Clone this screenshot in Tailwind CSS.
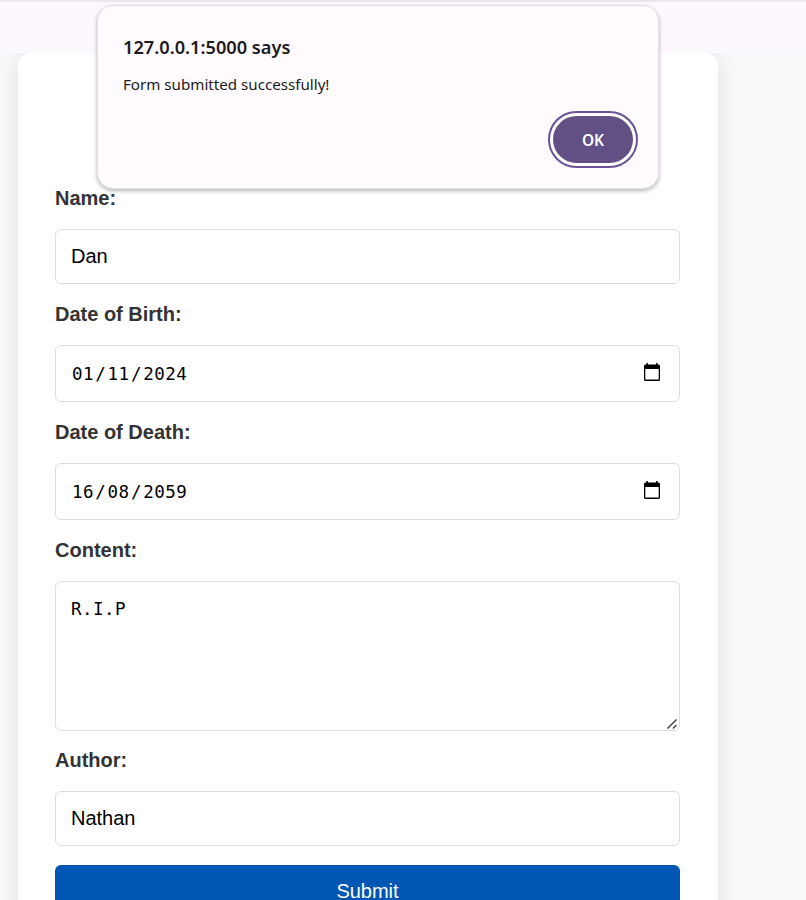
<!DOCTYPE html>
<html lang="en">
<head>
<meta charset="utf-8">
<title>Submit a memorial</title>
<script src="https://cdn.jsdelivr.net/npm/@tailwindcss/browser@4"></script>
</head>
<body class="h-[900px] overflow-hidden bg-[#f9f9f9] font-['Liberation_Sans',Arial,sans-serif] text-[20px] text-[#333]">
<div class="flex h-[900px] flex-col overflow-hidden">
  <header class="h-[53px] shrink-0 border-t-2 border-[#ece6ee] bg-[#fdf7ff]"></header>
  <main class="h-[847px] overflow-hidden pl-[18px]">
    <form class="h-[950px] w-[700px] rounded-[13px] bg-white pt-[130px] pr-[38px] pl-[37px] shadow-[0_0_25px_rgba(0,0,0,0.1)]">
      <label class="block h-[46px] leading-[30px] font-bold">Name:</label>
      <div class="flex h-[55px] items-center rounded-[6px] border border-[#ddd] px-[15px] pb-px text-black">Dan</div>
      <label class="block h-[61px] pt-[15px] leading-[30px] font-bold">Date of Birth:</label>
      <div class="flex h-[57px] items-center justify-between rounded-[6px] border border-[#ddd] pr-[17px] pl-[16px] text-black">
        <span class="flex gap-[1.3px] pt-px font-['DejaVu_Sans_Mono',monospace] text-[17.5px] tracking-[0.46px]"><span>01</span><span>/</span><span>11</span><span>/</span><span>2024</span></span>
        <svg class="mb-[3px] h-[20px] w-[20px]" viewBox="0 0 20 20"><path fill="#000" fill-rule="evenodd" d="M4.500 1H6v1.500h8V1h1.500v1.500h1Q18 2.500 18 4v13.500Q18 19 16.500 19h-13Q2 19 2 17.500V4Q2 2.500 3.500 2.500h1ZM3.300 7v10.600h13.400V7Z"/></svg>
      </div>
      <label class="block h-[61px] pt-[15px] leading-[30px] font-bold">Date of Death:</label>
      <div class="flex h-[57px] items-center justify-between rounded-[6px] border border-[#ddd] pr-[17px] pl-[16px] text-black">
        <span class="flex gap-[1.3px] pt-px font-['DejaVu_Sans_Mono',monospace] text-[17.5px] tracking-[0.46px]"><span>16</span><span>/</span><span>08</span><span>/</span><span>2059</span></span>
        <svg class="mb-[3px] h-[20px] w-[20px]" viewBox="0 0 20 20"><path fill="#000" fill-rule="evenodd" d="M4.500 1H6v1.500h8V1h1.500v1.500h1Q18 2.500 18 4v13.500Q18 19 16.500 19h-13Q2 19 2 17.500V4Q2 2.500 3.500 2.500h1ZM3.300 7v10.600h13.400V7Z"/></svg>
      </div>
      <label class="block h-[61px] pt-[15px] leading-[30px] font-bold">Content:</label>
      <div class="flex h-[150px] items-start justify-between rounded-[6px] border border-[#ddd] pt-[15px] pr-px pl-[15px] font-['DejaVu_Sans_Mono',monospace] text-[17.5px] leading-[24px] tracking-[0.46px] text-black">
        <span>R.I.P</span>
        <svg class="h-[12px] w-[12px] self-end" viewBox="0 0 12 12"><path d="M1.500 10.500 10.500 1.500M7 10.500 10.500 7" stroke="#444" stroke-width="1.500" fill="none"/></svg>
      </div>
      <label class="block h-[60px] pt-[14px] leading-[30px] font-bold">Author:</label>
      <div class="flex h-[55px] items-center rounded-[6px] border border-[#ddd] px-[15px] pb-px text-black">Nathan</div>
      <button type="button" class="mt-[19px] block h-[53px] w-full rounded-[6px] bg-[#0056b3] pb-px leading-[22px] text-white">Submit</button>
    </form>
  </main>
</div>
<div role="dialog" class="absolute top-[5px] left-[97px] flex h-[184px] w-[562px] flex-col rounded-[16px] border border-[#e5dfe8] bg-[#fffbff] pt-[28px] pr-[20px] pl-[25px] font-['Noto_Sans',sans-serif] text-[#1d1b20] shadow-[0_2px_4px_rgba(0,0,0,0.28)]">
  <h1 class="h-[26px] text-[18.2px] leading-[26px] font-semibold whitespace-nowrap"><span>127.0.0.1:5000 says</span></h1>
  <p class="mt-[13px] h-[22px] text-[15.15px] leading-[22px] whitespace-nowrap"><span>Form submitted successfully!</span></p>
  <button type="button" class="mt-[16px] h-[57px] w-[90px] shrink-0 self-end rounded-full border-2 border-[#6b5297] bg-white p-[3px]"><span class="flex h-full items-center justify-center rounded-full bg-[#625085] pt-[2px] text-[15.5px] font-semibold text-white">OK</span></button>
</div>
</body>
</html>
